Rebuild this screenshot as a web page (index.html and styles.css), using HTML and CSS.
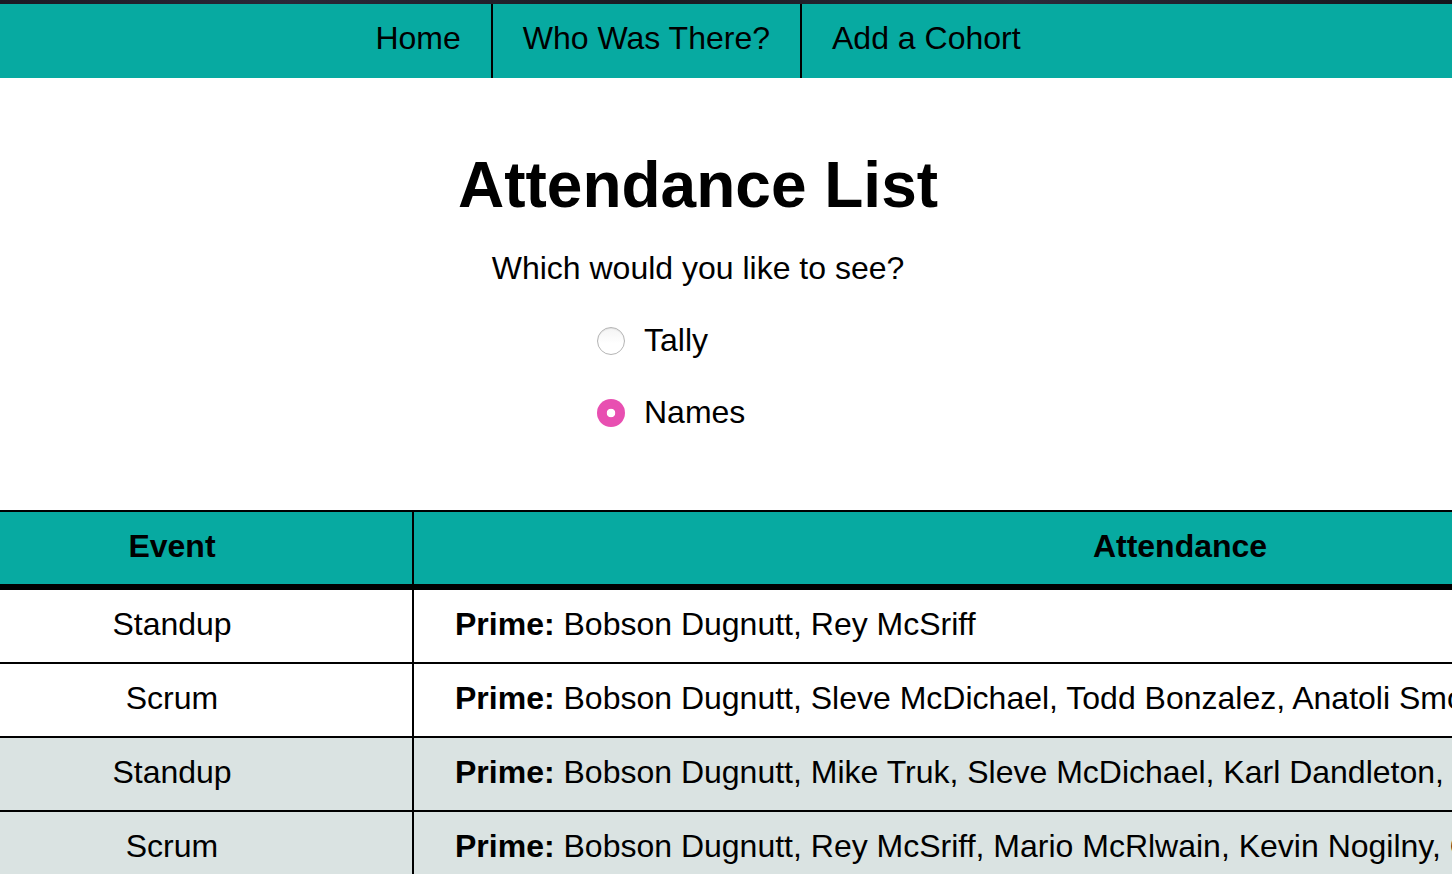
FILE: index.html
```html
<!DOCTYPE html>
<html lang="en">
<head>
<meta charset="utf-8">
<title>Attendance List</title>
<link rel="stylesheet" href="styles.css">
</head>
<body>
<div class="topstrip"></div>
<nav class="nav">
  <div class="nav-inner">
    <a class="nav-link" href="#">Home</a>
    <a class="nav-link" href="#">Who Was There?</a>
    <a class="nav-link last" href="#">Add a Cohort</a>
  </div>
</nav>
<main class="page">
  <h1 class="title">Attendance List</h1>
  <p class="prompt">Which would you like to see?</p>
  <div class="options">
    <label class="option"><input class="radio" type="radio" name="view" value="tally"><span>Tally</span></label>
    <label class="option"><input class="radio" type="radio" name="view" value="names" checked><span>Names</span></label>
  </div>
</main>
<div class="table-wrap">
  <table class="att-table">
    <thead>
      <tr><th class="col-event">Event</th><th class="col-att">Attendance</th></tr>
    </thead>
    <tbody>
      <tr><td class="col-event">Standup</td><td class="col-att names"><b>Prime:</b> Bobson Dugnutt, Rey McSriff</td></tr>
      <tr><td class="col-event">Scrum</td><td class="col-att names"><b>Prime:</b> Bobson Dugnutt, Sleve McDichael, Todd Bonzalez, Anatoli Smorin, Glenallen Mixon</td></tr>
      <tr class="alt"><td class="col-event">Standup</td><td class="col-att names"><b>Prime:</b> Bobson Dugnutt, Mike Truk, Sleve McDichael, Karl Dandleton, Onson Sweemey</td></tr>
      <tr class="alt"><td class="col-event">Scrum</td><td class="col-att names"><b>Prime:</b> Bobson Dugnutt, Rey McSriff, Mario McRlwain, Kevin Nogilny, Glenallen Mixon</td></tr>
    </tbody>
  </table>
</div>
</body>
</html>
```
FILE: styles.css
```css
* { box-sizing: border-box; }
html, body {
  margin: 0;
  padding: 0;
  overflow: hidden;
  background: #fff;
  font-family: "Liberation Sans", Arial, Helvetica, sans-serif;
  color: #000;
}
.topstrip {
  height: 4px;
  background: linear-gradient(90deg, #1b1a24, #2a2838 20%, #1a1b22 45%, #2b2a3a 70%, #15151c);
}
.nav {
  background: #07aaa1;
  height: 74px;
}
.nav-inner {
  width: 1396px;
  display: flex;
  justify-content: center;
}
.nav-link {
  display: block;
  padding: 16px 30px 21px;
  line-height: 37px;
  font-size: 32px;
  color: #000;
  text-decoration: none;
  border-right: 2px solid #000;
}
.nav-link.last { border-right: none; }
.page {
  width: 1396px;
  display: flex;
  flex-direction: column;
  align-items: center;
}
.title {
  margin: 70px 0 0;
  font-size: 64px;
  line-height: 74px;
  font-weight: bold;
}
.prompt {
  margin: 28px 0 0;
  font-size: 32px;
  line-height: 37px;
}
.options {
  width: 202px;
  margin-top: 35px;
  display: flex;
  flex-direction: column;
  gap: 35px;
}
.option {
  display: flex;
  align-items: center;
  gap: 19px;
  font-size: 32px;
  line-height: 37px;
}
.radio {
  appearance: none;
  -webkit-appearance: none;
  width: 28px;
  height: 28px;
  margin: 1px 0 0;
  border-radius: 50%;
  border: 1px solid #b5b5b5;
  background: linear-gradient(#f4f4f4, #fff 60%);
  box-shadow: inset 0 1px 1px rgba(0,0,0,0.08);
  flex: none;
}
.radio:checked {
  border: none;
  background: radial-gradient(circle, #fff 0 4px, #e84fb1 4.6px);
  box-shadow: none;
}
.table-wrap {
  margin-top: 79px;
  width: 1452px;
  overflow: hidden;
}
.att-table {
  margin-left: -68px;
  width: 2014px;
  table-layout: fixed;
  border-collapse: separate;
  border-spacing: 0;
  font-size: 32px;
}
.att-table th {
  background: #07aaa1;
  font-weight: bold;
  text-align: center;
  line-height: 36px;
  padding: 16px 0 20px;
  border-top: 2px solid #000;
  border-bottom: 6px solid #000;
}
.att-table td {
  line-height: 36px;
  padding: 16px 0 20px;
  border-bottom: 2px solid #000;
  white-space: nowrap;
  overflow: hidden;
}
.att-table .col-event {
  width: 480px;
  text-align: center;
}
.att-table .col-att {
  border-left: 2px solid #000;
}
.att-table td.names {
  text-align: left;
  padding-left: 41px;
}
.att-table tr.alt td {
  background: #dae3e2;
}
```
